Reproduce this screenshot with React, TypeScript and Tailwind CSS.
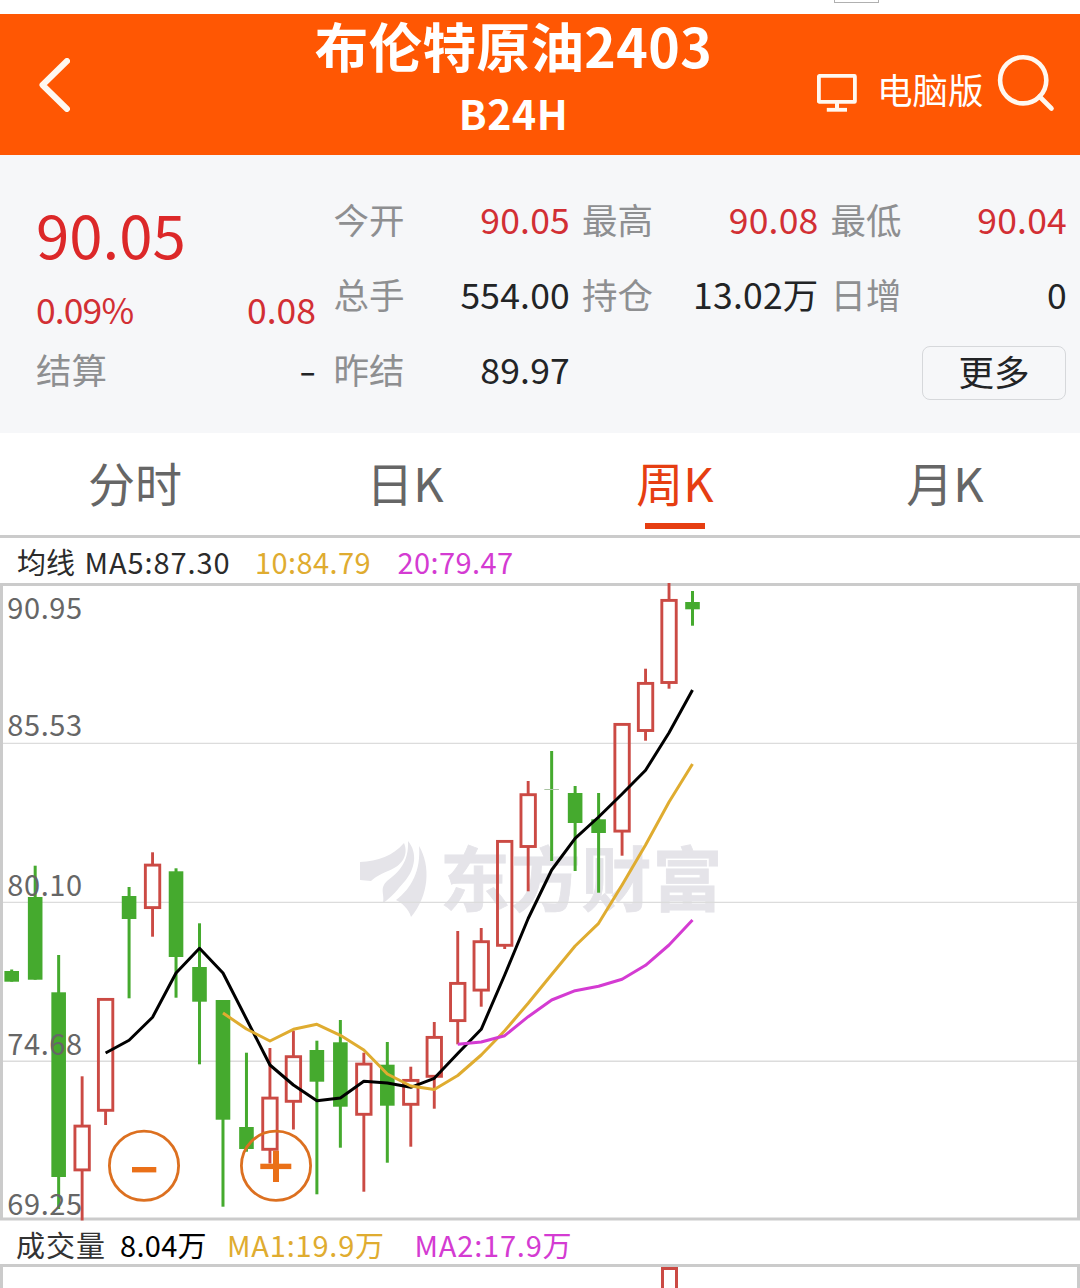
import { ReactNode } from 'react';

type Candle = {
  up: boolean;
  high: number;
  top: number;
  bottom: number;
  low: number;
};

const STEP = 23.476;
const FIRST_X = 11.7;
const CHART_TOP = 583;

// [up, high, body top, body bottom, low]
const rows: [number, number, number, number, number][] = [
  [0, 969.5, 971, 981.7, 981.7],
  [0, 865.7, 897, 979.7, 979.7],
  [0, 955, 992.3, 1177, 1209],
  [1, 1076.3, 1124.7, 1171.3, 1220.5],
  [1, 998, 998, 1111.7, 1125],
  [0, 887, 896, 919, 998.3],
  [1, 852.3, 863.7, 909, 936.7],
  [0, 868.3, 871.3, 957, 997.7],
  [0, 923.3, 967, 1001.7, 1064.3],
  [0, 1000, 1000, 1119.7, 1206.7],
  [0, 1052.7, 1127, 1149, 1151.7],
  [1, 1048, 1096.7, 1150.7, 1163.5],
  [1, 1030.7, 1055.3, 1102.7, 1129.5],
  [0, 1040.7, 1050, 1081.7, 1194.3],
  [0, 1020, 1042.3, 1106.7, 1147.7],
  [1, 1052.7, 1062.7, 1115.7, 1191.7],
  [0, 1042, 1064.7, 1105.7, 1162.7],
  [1, 1066.7, 1079, 1105.7, 1146.7],
  [1, 1022, 1036, 1077.7, 1108.7],
  [1, 931, 982, 1022, 1044.3],
  [1, 928, 940.3, 991.5, 1006.7],
  [1, 840, 840, 946.7, 949],
  [1, 781, 793.3, 847.9, 891.3],
  [0, 751, 789, 790, 861],
  [0, 786, 793, 823, 871],
  [0, 793, 819.3, 833, 892.7],
  [1, 723, 723, 832.5, 855.7],
  [1, 668.7, 682, 731.9, 740.7],
  [1, 583, 599, 683.9, 688.7],
  [0, 591, 602, 609.3, 625.7],
];

const candles: Candle[] = rows.map(([up, high, top, bottom, low]) => ({
  up: up === 1,
  high,
  top,
  bottom,
  low,
}));

const ma5 = [
  1053, 1040.3, 1017.3, 973, 948.3, 973, 1019, 1065, 1085, 1100.7, 1098, 1081.3, 1083, 1087.3,
  1078.3, 1053.5, 1029.3, 975, 918.5, 870, 838.3, 817, 794, 770.3, 732.7, 690,
];
const ma10 = [
  1013, 1029, 1041, 1029.3, 1024.3, 1035.3, 1050, 1074, 1086, 1089.5, 1075.5, 1055, 1030.7, 1003.3,
  974.5, 946, 923.3, 885, 845, 802, 764,
];
const ma20 = [1044.3, 1042, 1035.7, 1016.7, 1000, 990.7, 986.3, 979.3, 965.3, 945, 920];

const axis = [
  { label: '90.95', y: 619.3 },
  { label: '85.53', y: 736.3 },
  { label: '80.10', y: 896 },
  { label: '74.68', y: 1055.3 },
  { label: '69.25', y: 1215 },
];

const xAt = (i: number) => FIRST_X + i * STEP;

const linePoints = (values: number[], start: number) =>
  values.map((y, i) => `${xAt(start + i)},${y}`).join(' ');

function CandleShape({ c, x }: { c: Candle; x: number }) {
  if (!c.up) {
    const doji = c.bottom - c.top < 2;
    return (
      <g fill="#45aa2e">
        <rect x={x - 1.5} y={c.high} width={3} height={c.low - c.high} />
        <rect
          x={x - 7.3}
          y={c.top}
          width={14.6}
          height={c.bottom - c.top}
          fill={doji ? '#a9c4a2' : '#45aa2e'}
        />
      </g>
    );
  }
  return (
    <g stroke="#cb4a44" strokeWidth={2.9} fill="none">
      {c.high < c.top && <path d={`M${x} ${c.high}V${c.top + 1}`} />}
      {c.low > c.bottom && <path d={`M${x} ${c.bottom - 1}V${c.low}`} />}
      <rect x={x - 7.2} y={c.top + 1.4} width={14.4} height={c.bottom - c.top - 2.8} />
    </g>
  );
}

function KLineChart() {
  return (
    <svg
      className="block h-[638px] w-[1080px] overflow-visible"
      viewBox={`0 ${CHART_TOP} 1080 638`}
      fontFamily='"Noto Sans CJK SC", sans-serif'
    >
      {/* Watermark */}
      <g fill="#e5e4e9">
        <path d="M360 862C378 861 393 856 404 843C409 855 402 866 388 871C378 875 373 879 371 881L360 880Z" />
        <path d="M408 841C418 853 415 869 405 881C398 889 391 898 383 903C385 894 379 889 387 881C399 872 409 862 408 841Z" />
        <path d="M419 846C431 866 429 896 411 917C409 909 402 903 396 900C412 888 421 870 419 846Z" />
        <text
          x="440"
          y="906"
          fontSize="70"
          fontWeight="700"
          letterSpacing="0.8"
          stroke="#e5e4e9"
          strokeWidth="0.8"
        >
          东方财富
        </text>
      </g>

      {/* Grid and frame */}
      <g stroke="#dcdcdc" strokeWidth={1.4}>
        <path d="M3 743.4H1077M3 902.4H1077M3 1061.3H1077" />
      </g>
      <rect x={1.5} y={584.5} width={1077} height={634.5} fill="none" stroke="#cbcbcb" strokeWidth={3} />

      {candles.map((c, i) => (
        <CandleShape key={i} c={c} x={xAt(i)} />
      ))}

      {/* Moving averages */}
      <g fill="none" strokeWidth={3} strokeLinejoin="round">
        <polyline points={linePoints(ma5, 4)} stroke="#000000" />
        <polyline points={linePoints(ma10, 9)} stroke="#dfac30" />
        <polyline points={linePoints(ma20, 19)} stroke="#d43bd2" />
      </g>

      <g fill="#666666" fontSize="29" letterSpacing="0.6">
        {axis.map((a) => (
          <text key={a.label} x={7.3} y={a.y}>
            {a.label}
          </text>
        ))}
      </g>

      {/* Zoom buttons */}
      <g fill="none" stroke="#dc7020" strokeWidth={2.8}>
        <circle cx={144} cy={1165.8} r={34.6} />
        <circle cx={276} cy={1165.8} r={34.6} />
      </g>
      <g fill="#ea7018">
        <rect x={132} y={1167} width={24.3} height={5.4} />
        <rect x={260.3} y={1163.7} width={31} height={5.4} />
        <rect x={273} y={1150.7} width={6} height={31.3} />
      </g>
    </svg>
  );
}

function Quote({ label, value, red }: { label: string; value: string; red?: boolean }) {
  return (
    <div className="flex w-[236.5px] justify-between">
      <span className="text-[#8e8f91]">{label}</span>
      <span className={red ? 'tracking-[0.2px] text-[#d22f34]' : 'tracking-[0.2px] text-[#222426]'}>
        {value}
      </span>
    </div>
  );
}

function Tab({ children, active }: { children: ReactNode; active?: boolean }) {
  return (
    <div
      className={
        active
          ? 'flex flex-1 flex-col items-center text-[#e63e12]'
          : 'flex flex-1 flex-col items-center text-[#666666]'
      }
    >
      <span className="pt-[19px] leading-[60px]">{children}</span>
      {active && <span className="mt-[11px] h-1.5 w-[60px] bg-[#e63e12]" />}
    </div>
  );
}

export default function App() {
  return (
    <div className="h-[1288px] w-[1080px] overflow-hidden bg-white font-['Noto_Sans_CJK_SC',sans-serif]">
      <div className="flex h-3.5 pl-[834px]">
        <div className="h-[3px] w-[45px] border border-t-0 border-[#b0b0b0]" />
      </div>

      {/* Header */}
      <header className="flex h-[141px] bg-[#ff5703] text-white">
        <div className="w-[313px] pt-11 pl-[38px]">
          <svg className="h-[54px] w-8" viewBox="0 0 32 54" fill="none" stroke="#fff8f0" strokeWidth={6}>
            <path d="M29 3L4.5 27L29 51" strokeLinecap="round" strokeLinejoin="round" />
          </svg>
        </div>
        <div className="w-[401px] text-center font-bold">
          <h1 className="mt-px text-[53.5px] leading-[60px] tracking-[0.4px] whitespace-nowrap">
            布伦特原油2403
          </h1>
          <p className="mt-3 text-[41px] leading-[50px] tracking-[0.5px]">B24H</p>
        </div>
        <div className="ml-[102px] flex">
          <svg className="mt-[59px] h-10 w-[42px]" viewBox="0 0 42 40" fill="none" stroke="#fff8f0">
            <rect x="2.9" y="2.9" width="36" height="26" strokeWidth={3.8} rx="0.5" />
            <path d="M21 29V36" strokeWidth={4} />
            <path d="M10.8 36.8H31" strokeWidth={3.8} />
          </svg>
          <span className="mt-[55px] ml-[19px] text-[35.5px] leading-10">电脑版</span>
          <svg
            className="mt-[39px] ml-[12px] h-[60px] w-[60px]"
            viewBox="0 0 60 60"
            fill="none"
            stroke="#fff8f0"
            strokeWidth={4.6}
          >
            <circle cx="27.2" cy="27.3" r="23.1" />
            <path d="M43.5 43.5L55.5 55.5" strokeLinecap="round" />
          </svg>
        </div>
      </header>

      {/* Quote summary */}
      <section className="flex h-[278px] bg-[#f6f7f9] pr-[13px] pl-9 text-[35.5px] leading-[40px]">
        <div className="w-[280px] text-[#d22f34]">
          <div className="mt-[42px] text-[60px] leading-[72px] text-[#dc2829]">90.05</div>
          <div className="mt-5 flex justify-between">
            <span className="tracking-[-0.9px]">0.09%</span>
            <span>0.08</span>
          </div>
          <div className="mt-5 flex justify-between">
            <span className="text-[#8e8f91]">结算</span>
            <span className="origin-right scale-x-140 text-[#222426]">-</span>
          </div>
        </div>
        <div className="ml-[17.5px] flex-1 pt-11">
          <div className="flex justify-between">
            <Quote label="今开" value="90.05" red />
            <Quote label="最高" value="90.08" red />
            <Quote label="最低" value="90.04" red />
          </div>
          <div className="mt-[35px] flex justify-between">
            <Quote label="总手" value="554.00" />
            <Quote label="持仓" value="13.02万" />
            <Quote label="日增" value="0" />
          </div>
          <div className="mt-[35px] flex justify-between">
            <Quote label="昨结" value="89.97" />
            <button className="-mt-[3px] mr-px h-[54px] w-[144px] rounded-lg border-[1.5px] border-[#d6d8db] pb-1 leading-[46px] text-[#222426]">
              更多
            </button>
          </div>
        </div>
      </section>

      {/* Period tabs */}
      <nav className="flex h-[105px] border-b-[3px] border-[#cbcbcb] text-[47px]">
        <Tab>分时</Tab>
        <Tab>日K</Tab>
        <Tab active>周K</Tab>
        <Tab>月K</Tab>
      </nav>

      <div className="flex h-[45px] pl-[17px] text-[29px] leading-[46px] whitespace-pre">
        <span className="w-[67.5px] text-[#2b2b2b]">均线</span>
        <span className="w-[170.5px] tracking-[0.9px] text-[#2b2b2b]">MA5:87.30</span>
        <span className="w-[142.5px] tracking-[0.4px] text-[#dfac30]">10:84.79</span>
        <span className="tracking-[0.4px] text-[#d43bd2]">20:79.47</span>
      </div>

      <KLineChart />

      <div className="flex h-[43px] pl-4 text-[29px] leading-[47px] whitespace-pre">
        <span className="w-[104px] tracking-[1px] text-[#333333]">成交量</span>
        <span className="w-[107px] tracking-[0.3px] text-black">8.04万</span>
        <span className="w-[187.5px] tracking-[0.8px] text-[#dfac30]">MA1:19.9万</span>
        <span className="tracking-[0.8px] text-[#d43bd2]">MA2:17.9万</span>
      </div>

      {/* Volume chart, cut off by the fold */}
      <div className="h-10 border-[3px] border-[#cbcbcb] pl-[658px]">
        <div className="h-10 w-[17px] border-[3px] border-[#cb4a44]" />
      </div>
    </div>
  );
}
